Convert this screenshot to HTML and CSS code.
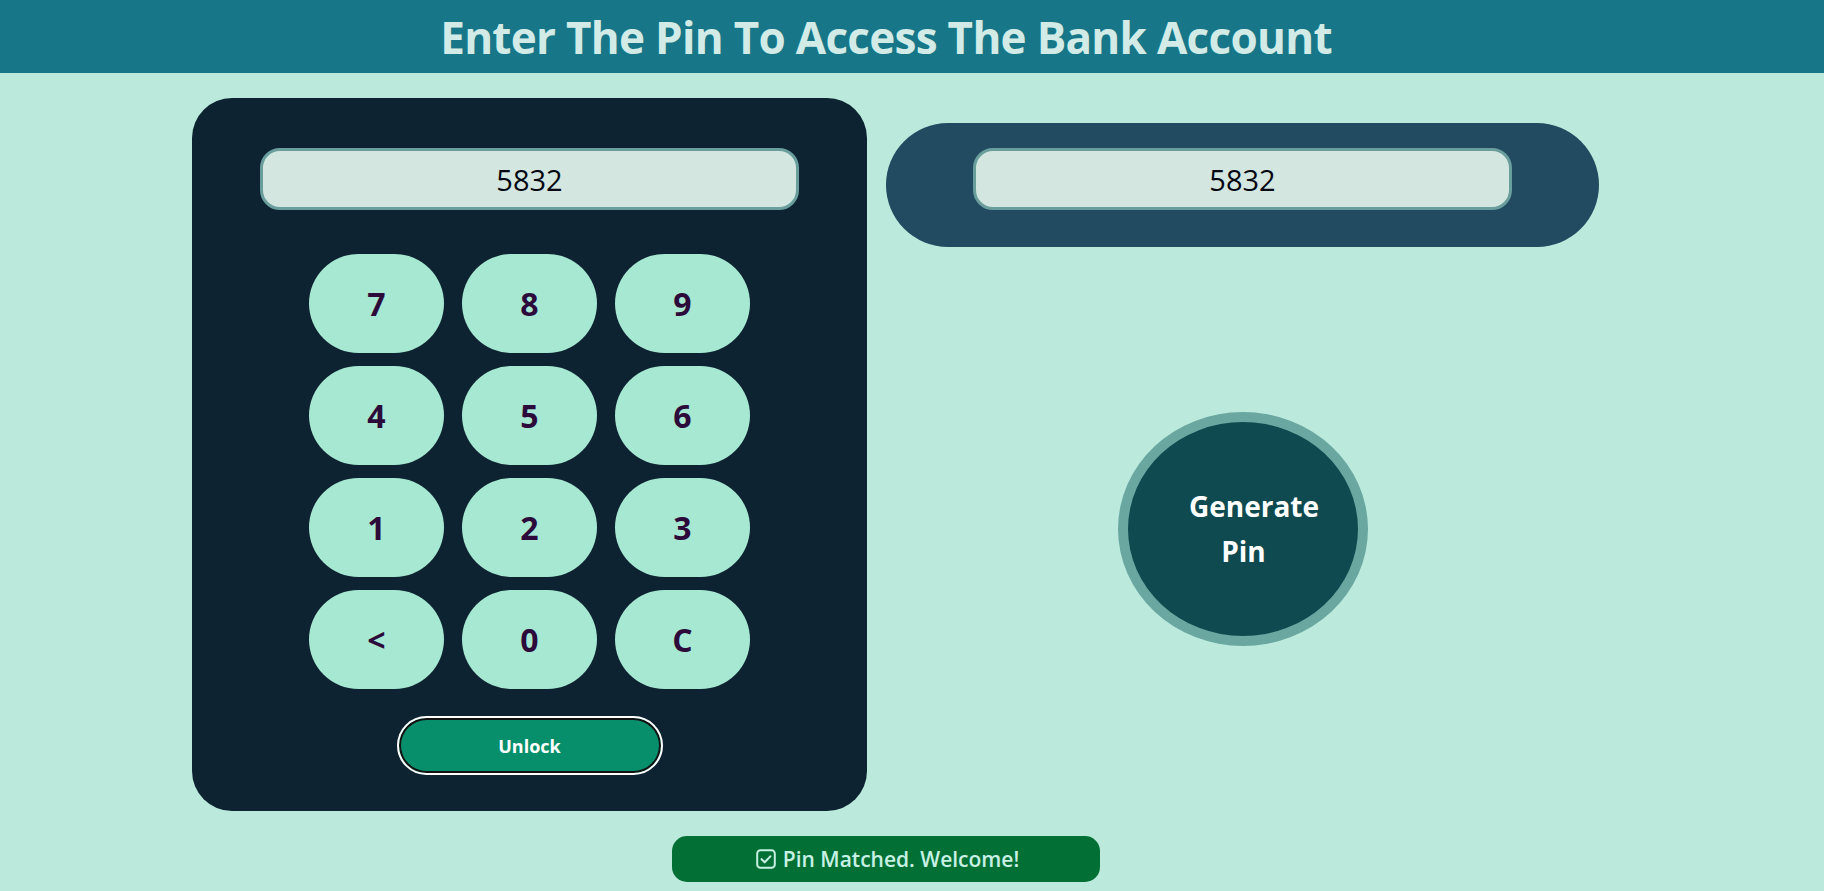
FILE: index.html
```html
<!DOCTYPE html>
<html lang="en">
<head>
<meta charset="utf-8">
<title>Pin Generator</title>
<link rel="stylesheet" href="styles.css">
</head>
<body>
<header class="topbar">
  <h1 class="title">Enter The Pin To Access The Bank Account</h1>
</header>
<main class="main">
  <section class="card">
    <input class="pin-input" type="text" value="5832" readonly>
    <div class="keypad">
      <button class="key">7</button>
      <button class="key">8</button>
      <button class="key">9</button>
      <button class="key">4</button>
      <button class="key">5</button>
      <button class="key">6</button>
      <button class="key">1</button>
      <button class="key">2</button>
      <button class="key">3</button>
      <button class="key">&lt;</button>
      <button class="key">0</button>
      <button class="key">C</button>
    </div>
    <button class="unlock">Unlock</button>
  </section>
  <section class="side">
    <div class="gen-panel">
      <input class="pin-input" type="text" value="5832" readonly>
    </div>
    <button class="generate"><span class="gen-l1">Generate</span><span class="gen-l2">Pin</span></button>
  </section>
</main>
<div class="notice-row">
  <div class="notice">
    <svg class="check" width="22" height="22" viewBox="0 0 20 20" aria-hidden="true">
      <rect x="2" y="2" width="16" height="16" rx="3" ry="3" fill="none" stroke="currentColor" stroke-width="1.8"/>
      <path d="M6 10.2 L8.8 13 L14 7.6" fill="none" stroke="currentColor" stroke-width="1.9" stroke-linecap="round" stroke-linejoin="round"/>
    </svg>
    <span>Pin Matched. Welcome!</span>
  </div>
</div>
</body>
</html>
```

FILE: styles.css
```css
* { box-sizing: border-box; }

html, body {
  margin: 0;
  padding: 0;
}

body {
  background: #bbeadc;
  font-family: "Open Sans", "Noto Sans", sans-serif;
  height: 891px;
  overflow: hidden;
}

.topbar {
  background: #177788;
  height: 73px;
  display: flex;
  align-items: center;
  justify-content: center;
  padding-right: 52px;
}

.title {
  margin: 0;
  color: #d2ebe6;
  font-size: 44px;
  font-weight: 700;
  letter-spacing: -0.7px;
  line-height: 1;
}

.main {
  display: flex;
  align-items: flex-start;
  gap: 19px;
  padding-left: 192px;
  padding-top: 25px;
}

.card {
  width: 675px;
  height: 713px;
  background: #0d2331;
  border-radius: 40px;
  display: flex;
  flex-direction: column;
  align-items: center;
  padding-top: 50px;
}

.pin-input {
  width: 539px;
  height: 62px;
  background: #d3e6e0;
  border: 3px solid #6a9e9d;
  border-radius: 20px;
  text-align: center;
  font-family: "Open Sans", sans-serif;
  font-size: 29px;
  color: #050812;
  outline: none;
}

.keypad {
  margin-top: 44px;
  display: grid;
  grid-template-columns: repeat(3, 135px);
  grid-auto-rows: 99px;
  column-gap: 18px;
  row-gap: 13px;
}

.key {
  border: none;
  background: #a7e8d2;
  border-radius: 50px;
  font-family: "Open Sans", sans-serif;
  font-size: 32px;
  font-weight: 700;
  color: #2c0b3b;
  padding: 0;
}

.unlock {
  margin-top: 27px;
  width: 266px;
  height: 59px;
  background: #078f6b;
  color: #ffffff;
  border: 2px solid #ffffff;
  box-shadow: inset 0 0 0 2px #121212;
  border-radius: 30px;
  font-family: "Open Sans", sans-serif;
  font-size: 18px;
  font-weight: 700;
}

.side {
  width: 713px;
  display: flex;
  flex-direction: column;
  align-items: center;
  padding-top: 25px;
}

.gen-panel {
  width: 713px;
  height: 124px;
  background: #224a60;
  border-radius: 62px;
  display: flex;
  justify-content: center;
  padding-top: 25px;
}

.generate {
  margin-top: 165px;
  width: 250px;
  height: 234px;
  border-radius: 50%;
  background: #0e4a50;
  border: 10px solid #6aa7a1;
  color: #ffffff;
  font-family: "Open Sans", sans-serif;
  font-size: 28px;
  font-weight: 700;
  line-height: 45px;
  display: flex;
  flex-direction: column;
  align-items: center;
  justify-content: center;
  padding: 0;
}

.gen-l1 { display: block; padding-left: 23px; }
.gen-l2 { display: block; padding-left: 2px; }

.notice-row {
  display: flex;
  padding-left: 672px;
  margin-top: 25px;
}

.notice {
  width: 428px;
  height: 46px;
  background: #027035;
  border-radius: 15px;
  color: #c8f0e4;
  display: flex;
  align-items: center;
  justify-content: center;
  gap: 6px;
  font-size: 21px;
  font-weight: 600;
  padding-left: 2px;
}

.check { display: block; }
```
